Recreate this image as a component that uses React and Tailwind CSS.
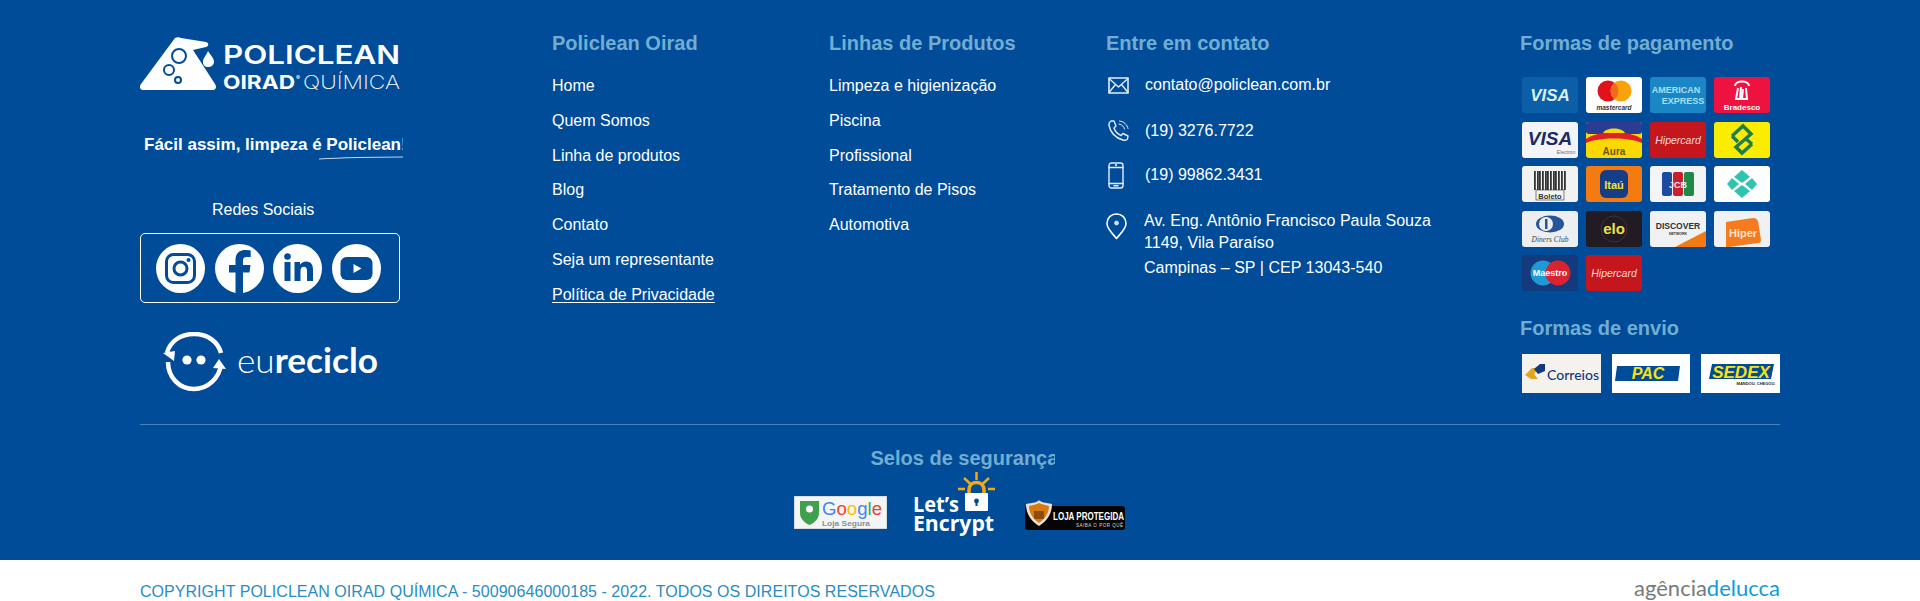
import React from 'react'

const institutional = ['Home', 'Quem Somos', 'Linha de produtos', 'Blog', 'Contato', 'Seja um representante', 'Política de Privacidade']
const products = ['Limpeza e higienização', 'Piscina', 'Profissional', 'Tratamento de Pisos', 'Automotiva']

const BLUE = '#004c99'

const Logo = () => (
  <svg width="260" height="53" viewBox="0 0 260 53" className="block">
    <path d="M35 1 C37 0 39 0 41 1 L66 5 C69 6 69 9 66 10 L53 13 L75 47 C77 50 76 53 72 53 L3 53 C0 53 -1 50 1 47 Z" fill="#fff" />
    <circle cx="39" cy="19" r="7" fill="none" stroke={BLUE} strokeWidth="2" />
    <circle cx="29" cy="33" r="5" fill="none" stroke={BLUE} strokeWidth="2" />
    <circle cx="38" cy="43" r="3" fill="none" stroke={BLUE} strokeWidth="2" />
    <path d="M68 14 C71 19 74 21 74 25 C74 28 71 30 68 30 C65 30 63 28 63 25 C63 21 66 19 68 14 Z" fill="#fff" />
    <text x="83" y="27" fill="#fff" fontFamily="Inter" fontWeight="600" fontSize="26" textLength="177" lengthAdjust="spacingAndGlyphs">POLICLEAN</text>
    <text x="83" y="52" fill="#fff" fontFamily="Inter" fontWeight="700" fontSize="19" textLength="72" lengthAdjust="spacingAndGlyphs">OIRAD</text>
    <text x="156" y="43" fill="#fff" fontFamily="Inter" fontSize="6">®</text>
    <text x="163" y="52" fill="#fff" fontFamily="Inter" fontWeight="200" fontSize="19" textLength="97" lengthAdjust="spacingAndGlyphs">QUÍMICA</text>
  </svg>
)

const SocialIcon = ({ children }) => (
  <svg width="49" height="49" viewBox="0 0 49 49" className="block">
    <circle cx="24.5" cy="24.5" r="24.5" fill="#fff" />
    {children}
  </svg>
)

const SocialBox = () => (
  <div className="flex h-[70px] w-[260px] items-center gap-[9.7px] rounded-[5px] border border-white pl-[15px]">
    <SocialIcon>
      <rect x="10.5" y="10.5" width="28" height="28" rx="7" fill="none" stroke={BLUE} strokeWidth="3" />
      <circle cx="24.5" cy="24.5" r="6.5" fill="none" stroke={BLUE} strokeWidth="3" />
      <circle cx="32.5" cy="16" r="2" fill={BLUE} />
    </SocialIcon>
    <SocialIcon>
      <path d="M28 49 V28.5 H34.5 L35.5 21 H28 V16.5 C28 14.3 29 13 31.5 13 H35.7 V6.5 C34.5 6.3 32.5 6 30 6 C24.3 6 20.5 9.5 20.5 15.7 V21 H14 V28.5 H20.5 V49 Z" fill={BLUE} />
    </SocialIcon>
    <SocialIcon>
      <circle cx="14.5" cy="12.5" r="3.3" fill={BLUE} />
      <rect x="11.5" y="18" width="6" height="19" fill={BLUE} />
      <path d="M21.5 18 H27 V20.8 C28.2 19 30.3 17.5 33 17.5 C38.3 17.5 40 21 40 26 V37 H34 V27.3 C34 24.5 33.2 22.8 30.8 22.8 C28.3 22.8 27.5 24.7 27.5 27.3 V37 H21.5 Z" fill={BLUE} />
    </SocialIcon>
    <SocialIcon>
      <rect x="8.5" y="13" width="32" height="23" rx="6" fill={BLUE} />
      <path d="M21.5 20 L29.5 24.5 L21.5 29 Z" fill="#fff" />
    </SocialIcon>
  </div>
)

const Eureciclo = () => (
  <svg width="216" height="60" viewBox="0 0 216 60" className="block">
    <path d="M4 21 C7 9 18 2 31 2 C45 2 55 10 58 21" fill="none" stroke="#fff" strokeWidth="4.5" />
    <path d="M0 21 L12 19 L11 29 Z" fill="#fff" />
    <path d="M5 30 C5 45 16 57 31 57 C45 57 56 46 58 33" fill="none" stroke="#fff" strokeWidth="4.5" />
    <path d="M63 37 L50 36 L56 27 Z" fill="#fff" />
    <circle cx="24" cy="28" r="4.6" fill="#fff" />
    <circle cx="38" cy="28" r="4.6" fill="#fff" />
    <text x="74" y="41" fill="#fff" fontFamily="Lato" fontSize="34" textLength="141" lengthAdjust="spacingAndGlyphs">
      <tspan fontWeight="300">eu</tspan>
      <tspan fontWeight="700">reciclo</tspan>
    </text>
  </svg>
)

const Heading = ({ children }) => (
  <h3 className="text-[20px] leading-[28px] font-bold text-[#72add2]">{children}</h3>
)

const LinkList = ({ title, items, width }) => (
  <div className={width}>
    <Heading>{title}</Heading>
    <ul className="mt-[11px]">
      {items.map((item) => (
        <li key={item} className="h-[34.8px] text-[16px] leading-[35px] text-white">
          <span className={item.startsWith('Política') ? 'underline underline-offset-2' : ''}>{item}</span>
        </li>
      ))}
    </ul>
  </div>
)

const lineIcon = { fill: 'none', stroke: '#e4edf6', strokeWidth: 1.4, strokeLinejoin: 'round', strokeLinecap: 'round' }

const MailIcon = () => (
  <svg width="21" height="17" viewBox="0 0 21 17" {...lineIcon}>
    <rect x="1" y="1" width="19" height="15" strokeWidth="1.6" />
    <path d="M1 1.5 L10.5 10 L20 1.5 M1 15.5 L7.5 7.5 M20 15.5 L13.5 7.5" />
  </svg>
)

const PhoneIcon = () => (
  <svg width="21" height="21" viewBox="0 0 21 21" {...lineIcon}>
    <path d="M3 1 L6 1 L8 6 L6 8 C7 11 9.5 14 13 15.5 L15 13.5 L20 16 L19.5 19 C19 20 17 20.5 15 20 C8 18 2.5 12.5 1 5.5 C0.7 3.5 1.5 2 3 1 Z" />
    <path d="M11 4 C14 4.5 16 6.5 16.5 9 M11.5 1 C16 1.5 19 4.5 20 8.5" strokeWidth="1" />
  </svg>
)

const MobileIcon = () => (
  <svg width="16" height="27" viewBox="0 0 16 27" {...lineIcon}>
    <rect x="1" y="1" width="14" height="25" rx="2.5" />
    <path d="M1 5.5 H15 M1 21.5 H15 M6 23.8 H10" />
    <circle cx="8" cy="3.2" r="0.4" />
  </svg>
)

const PinIcon = () => (
  <svg width="21" height="27" viewBox="0 0 21 27" fill="none" stroke="#fff" strokeWidth="1.6" strokeLinejoin="round">
    <path d="M10.5 25.5 C7 21 1 16 1 10.5 C1 5 5 1 10.5 1 C16 1 20 5 20 10.5 C20 16 14 21 10.5 25.5 Z" />
    <circle cx="10.5" cy="10" r="2" fill="#cfe0ef" strokeWidth="0.6" />
  </svg>
)

const ContactRow = ({ icon, children, nudge }) => (
  <div className="flex h-[34px] items-center text-[16px] text-white">
    <div className="flex w-[39px] justify-start pl-[2px]">{icon}</div>
    <span className={nudge}>{children}</span>
  </div>
)

const Contact = () => (
  <div className="w-[414px]">
    <Heading>Entre em contato</Heading>
    <div className="mt-[11px] flex flex-col gap-[11px]">
      <ContactRow icon={<MailIcon />}>contato@policlean.com.br</ContactRow>
      <ContactRow icon={<PhoneIcon />} nudge="pt-[2px]">(19) 3276.7722</ContactRow>
      <ContactRow icon={<MobileIcon />}>(19) 99862.3431</ContactRow>
    </div>
    <div className="mt-[18px] flex text-[16px] leading-[22px] tracking-[0.03px] text-white">
      <div className="w-[38px] pt-[3px]"><PinIcon /></div>
      <div>
        <p>Av. Eng. Antônio Francisco Paula Souza</p>
        <p>1149, Vila Paraíso</p>
        <p className="mt-[3px]">Campinas – SP | CEP 13043-540</p>
      </div>
    </div>
  </div>
)

const Card = ({ bg, children }) => (
  <svg width="56" height="36" viewBox="0 0 56 36" className="block">
    <rect width="56" height="36" rx="3" fill={bg} />
    {children}
  </svg>
)

const T = ({ x = 28, y, size, fill = '#fff', weight = 700, italic, children, family = 'Liberation Sans' }) => (
  <text x={x} y={y} textAnchor="middle" fontSize={size} fill={fill} fontWeight={weight} fontStyle={italic ? 'italic' : 'normal'} fontFamily={family}>
    {children}
  </text>
)

const cards = [
  <Card bg="#0b5fa8"><T y="24" size="17" fill="#d8f0ee" italic>VISA</T></Card>,
  <Card bg="#fff">
    <circle cx="22" cy="14" r="10.5" fill="#e2121c" />
    <circle cx="35" cy="14" r="10.5" fill="#f9a30c" />
    <path d="M28.5 5.8 A10.5 10.5 0 0 1 28.5 22.2 A10.5 10.5 0 0 1 28.5 5.8 Z" fill="#f26a1c" />
    <T y="33" size="6.5" fill="#333" italic>mastercard</T>
  </Card>,
  <Card bg="#1a86c5">
    <T x="26" y="16" size="9" fill="#a9e0f2">AMERICAN</T>
    <T x="33" y="27" size="9" fill="#a9e0f2">EXPRESS</T>
  </Card>,
  <Card bg="#ee1240">
    <path d="M21 9 C21 3 35 3 35 9 M24 11 L22 22 L26 22 L27 10 M29 12 L28 22 L33 22 L32 11" fill="none" stroke="#fff" strokeWidth="2" />
    <T y="33" size="8">Bradesco</T>
  </Card>,
  <Card bg="#f3f5f8">
    <T y="23" size="19" fill="#1d2a63" italic>VISA</T>
    <T x="44" y="32" size="5" fill="#667" weight={400}>Electron</T>
  </Card>,
  <Card bg="#fbd800">
    <rect width="56" height="12" rx="3" fill="#2b3d92" />
    <path d="M0 17 C12 8 44 8 56 17 V21 C44 15 12 15 0 21 Z" fill="#e01f26" />
    <path d="M17 11 C20 5 36 5 39 11 Z" fill="#fbd800" />
    <T y="33" size="10" fill="#6a5a10">Aura</T>
  </Card>,
  <Card bg="#c4161c"><T y="22" size="10.5" fill="#f7dcdc" italic weight={400}>Hipercard</T></Card>,
  <Card bg="#fbed00">
    <g fill="none" stroke="#1f7d4d" strokeWidth="3.5">
      <path d="M18 14 L29 4 L37 12 L22 25 L28 31 L38 22" />
      <path d="M18 14 L24 20 M32 17 L38 22" />
    </g>
  </Card>,
  <Card bg="#f2f2f2">
    <g fill="#333">
      {[12, 15, 17, 20, 23, 25, 28, 31, 33, 36, 39, 42].map((x) => (
        <rect key={x} x={x} y="5" width="1.8" height="19" />
      ))}
    </g>
    <rect x="14" y="24" width="28" height="10" fill="#f2f2f2" stroke="#333" strokeWidth="0.6" />
    <T y="32.5" size="7.5" fill="#333">Boleto</T>
  </Card>,
  <Card bg="#f47b12">
    <rect x="14" y="4" width="28" height="28" rx="6" fill="#163e87" />
    <T y="23" size="11" fill="#f7e32c">Itaú</T>
  </Card>,
  <Card bg="#f3f4f6">
    <rect x="12" y="6" width="10" height="24" rx="2" fill="#1c4ba0" />
    <rect x="23" y="6" width="10" height="24" rx="2" fill="#c8202c" />
    <rect x="34" y="6" width="10" height="24" rx="2" fill="#1e8a4a" />
    <T y="22" size="9" fill="#eef">JCB</T>
  </Card>,
  <Card bg="#fff">
    <g fill="#2ec4b0">
      <path d="M28 4 L36 11 L28 17 L20 11 Z" />
      <path d="M28 32 L36 25 L28 19 L20 25 Z" />
      <path d="M18 12 L25 18 L18 24 L13 18 Z" />
      <path d="M38 12 L31 18 L38 24 L43 18 Z" />
    </g>
  </Card>,
  <Card bg="#eceef0">
    <ellipse cx="28" cy="13" rx="14" ry="8.5" fill="#27559b" />
    <circle cx="24" cy="13" r="7" fill="#eceef0" />
    <rect x="23" y="8" width="2.5" height="10" fill="#27559b" />
    <T y="31" size="7.5" fill="#444" weight={400} italic family="Liberation Serif">Diners Club</T>
  </Card>,
  <Card bg="#231b24">
    <circle cx="28" cy="18" r="13" fill="none" stroke="#3a3038" />
    <T y="23" size="15" fill="#eae04a">elo</T>
  </Card>,
  <Card bg="#f0f1f3">
    <path d="M25 36 L56 20 V33 Q56 36 53 36 Z" fill="#f27a12" />
    <T y="18" size="8.5" fill="#28333a">DISCOVER</T>
    <T y="24" size="3.5" fill="#28333a">NETWORK</T>
  </Card>,
  <Card bg="#f0f1f3">
    <path d="M12 11 L39 7 C42 7 43 8 44 10 L47 29 C47 31 46 32 44 32 L15 36 L12 36 Z" fill="#f47b20" />
    <T x="29" y="26" size="11" fill="#fde5d0">Hiper</T>
  </Card>,
  <Card bg="#123a7c">
    <circle cx="21" cy="18" r="12.5" fill="#1e9ad6" />
    <circle cx="36" cy="18" r="12.5" fill="#d9232e" />
    <T y="21" size="9">Maestro</T>
  </Card>,
  <Card bg="#c4161c"><T y="22" size="10.5" fill="#f7dcdc" italic weight={400}>Hipercard</T></Card>,
]

const Correios = () => (
  <svg width="79" height="39" viewBox="0 0 79 39" className="block">
    <rect width="79" height="39" fill="#f5f2ee" />
    <path d="M3 21 L10 14 L17 14 L12 20 L16 25 L9 25 Z" fill="#e2a61c" />
    <path d="M12 15 L18 10 L23 10 L23 17 L16 20 Z" fill="#123a7c" />
    <text x="25" y="26" fontFamily="Lato" fontSize="14" fontWeight="500" fill="#123a7c" textLength="52" lengthAdjust="spacingAndGlyphs">Correios</text>
  </svg>
)

const Pac = () => (
  <svg width="78" height="39" viewBox="0 0 78 39" className="block">
    <rect width="78" height="39" fill="#fff" />
    <path d="M5 12 L68 12 L66 27 L3 27 Z" fill="#004c99" />
    <text x="36" y="25" textAnchor="middle" fontFamily="Liberation Sans" fontSize="16" fontWeight="700" fontStyle="italic" fill="#fbe20f">PAC</text>
  </svg>
)

const Sedex = () => (
  <svg width="79" height="39" viewBox="0 0 79 39" className="block">
    <rect width="79" height="39" fill="#fff" />
    <path d="M11 10 L73 10 L70 25 L8 25 Z" fill="#004c99" />
    <text x="40" y="24" textAnchor="middle" fontFamily="Liberation Sans" fontSize="17" fontWeight="700" fontStyle="italic" fill="#fbe20f">SEDEX</text>
    <text x="55" y="31" textAnchor="middle" fontFamily="Liberation Sans" fontSize="4" fontWeight="700" fill="#222">MANDOU, CHEGOU.</text>
  </svg>
)

const Payment = () => (
  <div className="w-[260px]">
    <Heading>Formas de pagamento</Heading>
    <div className="mt-[20px] grid w-[248px] grid-cols-[repeat(4,56px)] gap-x-[8px] gap-y-[8.5px] pl-[2px]">
      {cards.map((card, i) => <div key={i}>{card}</div>)}
    </div>
    <div className="mt-[23px]"><Heading>Formas de envio</Heading></div>
    <div className="mt-[12px] flex justify-between pl-[2px]">
      <Correios />
      <Pac />
      <Sedex />
    </div>
  </div>
)

const GoogleSeal = () => (
  <svg width="93" height="33" viewBox="0 0 93 33" className="mb-[7px] block">
    <rect width="93" height="33" fill="#f4f6f6" stroke="#b9c4cc" />
    <path d="M6 5 H25 V17 C25 23 20 27 15.5 29 C11 27 6 23 6 17 Z" fill="#3fa14f" />
    <circle cx="15.5" cy="13" r="3.5" fill="#fff" />
    <text x="28" y="19" fontFamily="Liberation Sans" fontSize="18" textLength="60" lengthAdjust="spacingAndGlyphs">
      <tspan fill="#4285f4">G</tspan>
      <tspan fill="#ea4335">o</tspan>
      <tspan fill="#fbbc05">o</tspan>
      <tspan fill="#4285f4">g</tspan>
      <tspan fill="#34a853">l</tspan>
      <tspan fill="#ea4335">e</tspan>
    </text>
    <text x="28" y="30" fontFamily="Liberation Sans" fontWeight="700" fontSize="8" fill="#8a8f94" textLength="48" lengthAdjust="spacingAndGlyphs">Loja Segura</text>
  </svg>
)

const LetsEncrypt = () => (
  <svg width="82" height="64" viewBox="0 0 82 64" className="mr-[2px] ml-[-2px] block">
    <g fill="none" stroke="#f7a80d" strokeWidth="2.5">
      <path d="M63.5 0 V8 M51 6 L57.5 12 M76 6 L69.5 12 M45 17 H52 M75 17 H82" />
      <path d="M56 22 V18 C56 8 71 8 71 18 V22" strokeWidth="3.5" />
    </g>
    <rect x="52" y="21" width="23" height="18" rx="1" fill="#fff" />
    <circle cx="63.5" cy="29" r="2.4" fill={BLUE} />
    <rect x="62.5" y="29" width="2" height="5" fill={BLUE} />
    <text x="0" y="40" fontFamily="Open Sans" fontSize="22" fontWeight="700" fill="#fff" textLength="46" lengthAdjust="spacingAndGlyphs">Let’s</text>
    <text x="0" y="59" fontFamily="Open Sans" fontSize="22" fontWeight="700" fill="#fff" textLength="81" lengthAdjust="spacingAndGlyphs">Encrypt</text>
  </svg>
)

const LojaProtegida = () => (
  <svg width="100" height="30" viewBox="0 0 100 30" className="mb-[6px] block">
    <rect y="6" width="100" height="24" rx="3" fill="#050505" />
    <path d="M1 4 C8 3 13 2 14 0 C15 2 21 3 27 4 C27 14 22 21 14 26 C6 21 1 14 1 4 Z" fill="#e8e2d8" />
    <path d="M4 6 C9 5 12 4 14 3 C16 4 20 5 24 6 C24 13 20 19 14 23 C8 19 4 13 4 6 Z" fill="#d87a12" />
    <rect x="9" y="11" width="10" height="8" fill="#8e4d0c" />
    <text x="28" y="20" fontFamily="Liberation Sans" fontSize="10" fontWeight="700" fill="#fff" textLength="71" lengthAdjust="spacingAndGlyphs">LOJA PROTEGIDA</text>
    <text x="51" y="27" fontFamily="Liberation Sans" fontSize="4.5" fill="#ddd" textLength="47">SAIBA O POR QUÊ</text>
  </svg>
)

export default function App() {
  return (
    <footer className="w-full font-['Liberation_Sans',Arial,sans-serif]">
      <div className="h-[560px] bg-[#004c99]">
        <div className="mx-auto w-[1640px]">
          <div className="flex h-[425px] border-b border-[#4d82b8] pt-[29px]">
            <div className="w-[412px]">
              <div className="mt-[8px]"><Logo /></div>
              <div className="mt-[43px] h-[24px] w-[263px] overflow-hidden pl-[4px] text-[17px] leading-[24px] font-bold whitespace-nowrap text-white">
                Fácil assim, limpeza é Policlean!
              </div>
              <svg width="84" height="4" viewBox="0 0 84 4" className="mt-[-1px] ml-[179px] block">
                <path d="M0 3 C25 1.5 55 1 84 1" fill="none" stroke="#c5d6e8" strokeWidth="1.2" />
              </svg>
              <div className="mt-[38px] pl-[72px] text-[16px] leading-[24px] text-white">Redes Sociais</div>
              <div className="mt-[11px]"><SocialBox /></div>
              <div className="mt-[29px] ml-[23px]"><Eureciclo /></div>
            </div>
            <LinkList title="Policlean Oirad" items={institutional} width="w-[277px]" />
            <LinkList title="Linhas de Produtos" items={products} width="w-[277px]" />
            <Contact />
            <Payment />
          </div>
          <div className="flex flex-col items-center">
            <div className="mt-[19px] ml-[5px] w-[184px] overflow-hidden whitespace-nowrap">
              <Heading>Selos de segurança</Heading>
            </div>
            <div className="flex items-end gap-[28px] pr-[2px]">
              <GoogleSeal />
              <LetsEncrypt />
              <LojaProtegida />
            </div>
          </div>
        </div>
      </div>
      <div className="h-[41px] bg-white">
        <div className="mx-auto flex w-[1640px] items-start justify-between">
          <p className="pt-[22px] text-[16px] leading-[20px] tracking-[0.04px] text-[#2a8cc4]">
            COPYRIGHT POLICLEAN OIRAD QUÍMICA - 50090646000185 - 2022. TODOS OS DIREITOS RESERVADOS
          </p>
          <p className="pt-[15px] font-['Lato',sans-serif] text-[22px] leading-[26px] font-normal">
            <span className="text-[#77797c]">agência</span>
            <span className="text-[#0f9bdc]">delucca</span>
          </p>
        </div>
      </div>
    </footer>
  )
}
